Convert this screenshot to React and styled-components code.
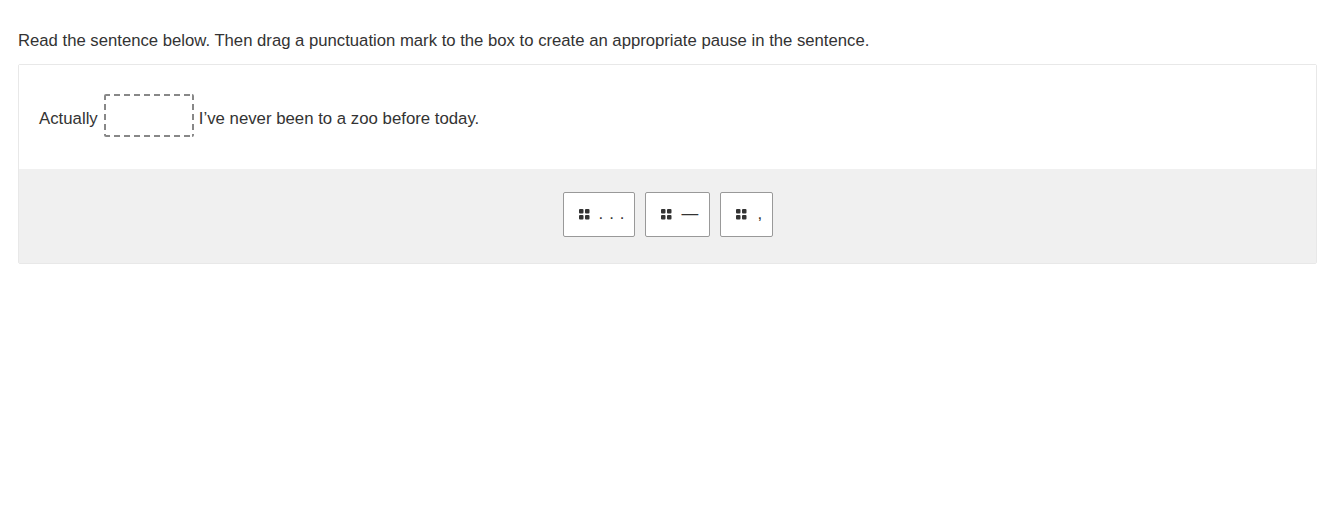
import styled, { createGlobalStyle } from 'styled-components';

const GlobalStyle = createGlobalStyle`
  body {
    margin: 0;
    background: #fff;
    font-family: "Liberation Sans", Arial, sans-serif;
    color: #333;
  }
`;

const Page = styled.div`
  padding: 30px 18px 0;
`;

const Prompt = styled.p`
  margin: 0 0 12px;
  font-size: 16.7px;
  line-height: 22px;
  color: #333;
`;

const Panel = styled.div`
  border: 1px solid #e8e8e8;
  border-radius: 2px;
`;

const Sentence = styled.div`
  display: flex;
  align-items: center;
  height: 104px;
  padding: 4px 20px 0;
  box-sizing: border-box;
  font-size: 16.8px;
  background: #fff;
`;

const DropBox = styled.div`
  width: 90px;
  height: 43px;
  margin: -8px 5px 0 6px;
  box-sizing: border-box;
  border-radius: 2px;
  background-image:
    repeating-linear-gradient(90deg, #888 0 6px, transparent 6px 10px),
    repeating-linear-gradient(90deg, #888 0 6px, transparent 6px 10px),
    repeating-linear-gradient(180deg, #888 0 6px, transparent 6px 10px),
    repeating-linear-gradient(180deg, #888 0 6px, transparent 6px 10px);
  background-size: 100% 2px, 100% 2px, 2px 100%, 2px 100%;
  background-position: 0 0, 0 100%, 0 0, 100% 0;
  background-repeat: no-repeat;
`;

const Tray = styled.div`
  display: flex;
  justify-content: center;
  gap: 10px;
  padding: 23px 0 26px;
  background: #f0f0f0;
`;

const Chip = styled.div`
  display: flex;
  align-items: center;
  gap: ${({ $gap }) => $gap}px;
  width: ${({ $width }) => $width}px;
  height: 45px;
  box-sizing: border-box;
  padding-left: 15px;
  background: #fff;
  border: 1px solid #999;
  border-radius: 2px;
  font-size: 16.8px;
  color: #333;
`;

const Mark = styled.span`
  letter-spacing: ${({ $spacing }) => $spacing || 0}px;
  line-height: 1;
`;

function Grip() {
  return (
    <svg width="11" height="11" viewBox="0 0 11 11">
      <rect x="0" y="0" width="4.5" height="4.5" rx="1" fill="#333" />
      <rect x="6" y="0" width="4.5" height="4.5" rx="1" fill="#333" />
      <rect x="0" y="6" width="4.5" height="4.5" rx="1" fill="#333" />
      <rect x="6" y="6" width="4.5" height="4.5" rx="1" fill="#333" />
    </svg>
  );
}

const marks = [
  { label: '...', width: 72, gap: 9, spacing: 6 },
  { label: '—', width: 65, gap: 10 },
  { label: ',', width: 53, gap: 11 },
];

export default function App() {
  return (
    <>
      <GlobalStyle />
      <Page>
        <Prompt>
          Read the sentence below. Then drag a punctuation mark to the box to create an appropriate pause in the sentence.
        </Prompt>
        <Panel>
          <Sentence>
            <span>Actually</span>
            <DropBox />
            <span>I’ve never been to a zoo before today.</span>
          </Sentence>
          <Tray>
            {marks.map((m) => (
              <Chip key={m.label} $width={m.width} $gap={m.gap}>
                <Grip />
                <Mark $spacing={m.spacing}>{m.label}</Mark>
              </Chip>
            ))}
          </Tray>
        </Panel>
      </Page>
    </>
  );
}
